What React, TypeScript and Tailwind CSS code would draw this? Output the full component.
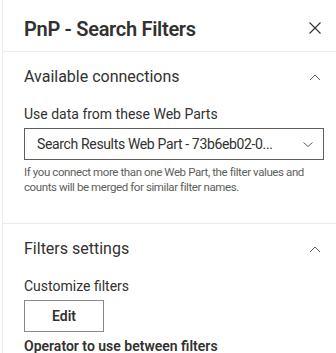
import React from "react";

const font = { fontFamily: 'Roboto, "Noto Sans", sans-serif' };

function ChevronUp() {
  return (
    <svg width="12" height="12" viewBox="0 0 12 12" className="text-[#605e5c] mt-[2px]">
      <path d="M1 8 L6 3 L11 8" fill="none" stroke="currentColor" strokeWidth="1" />
    </svg>
  );
}

function ChevronDown() {
  return (
    <svg width="12" height="12" viewBox="0 0 12 12" className="text-[#605e5c]">
      <path d="M1.5 4.5 L6 8.5 L10.5 4.5" fill="none" stroke="currentColor" strokeWidth="1" />
    </svg>
  );
}

function CloseIcon() {
  return (
    <svg width="12" height="12" viewBox="0 0 12 12" className="text-[#323130] mt-[4px]">
      <path d="M0.5 0.5 L11.5 11.5 M11.5 0.5 L0.5 11.5" fill="none" stroke="currentColor" strokeWidth="1.1" />
    </svg>
  );
}

function GroupHeader({ title }: { title: string }) {
  return (
    <div className="flex items-center justify-between pt-[14px] pr-[15px]">
      <div className="text-[16px] leading-[22px] text-[#323130]">{title}</div>
      <ChevronUp />
    </div>
  );
}

export default function App() {
  return (
    <div className="w-[336px] h-[353px] bg-white overflow-hidden flex" style={font}>
      <div className="w-[2px] shrink-0" />
      <div className="flex-1 border-l border-[#edebe9] flex flex-col">
        <div className="h-[52px] shrink-0 flex items-center justify-between pl-[21px] pr-[15px] border-b border-[#edebe9]">
          <div className="pt-[6px] text-[20px] leading-[28px] font-semibold tracking-[-0.3px] text-[#323130]">
            PnP - Search Filters
          </div>
          <CloseIcon />
        </div>

        <div className="pl-[21px] pb-[28px] border-b border-[#edebe9]">
          <GroupHeader title="Available connections" />
          <div className="mt-[16px] text-[14px] leading-[20px] text-[#323130]">
            Use data from these Web Parts
          </div>
          <div className="mt-[4px] mr-[12px] h-[32px] border border-[#605e5c] flex items-center justify-between pl-[12px] pr-[9px]">
            <span className="text-[14px] tracking-[-0.35px] text-[#323130] whitespace-nowrap">
              Search Results Web Part - 73b6eb02-0...
            </span>
            <ChevronDown />
          </div>
          <div className="mt-[5px] text-[11.5px] leading-[15px] tracking-[-0.4px] text-[#605e5c]">
            If you connect more than one Web Part, the filter values and counts will be merged for similar filter names.
          </div>
        </div>

        <div className="pl-[21px]">
          <GroupHeader title="Filters settings" />
          <div className="mt-[16px] text-[14px] leading-[20px] text-[#323130]">
            Customize filters
          </div>
          <button className="mt-[4px] w-[80px] h-[32px] border border-[#8a8886] text-[14px] font-semibold text-[#323130] bg-white">
            Edit
          </button>
          <div className="mt-[4px] text-[14px] leading-[20px] font-semibold text-[#323130]">
            Operator to use between filters
          </div>
        </div>
      </div>
    </div>
  );
}
